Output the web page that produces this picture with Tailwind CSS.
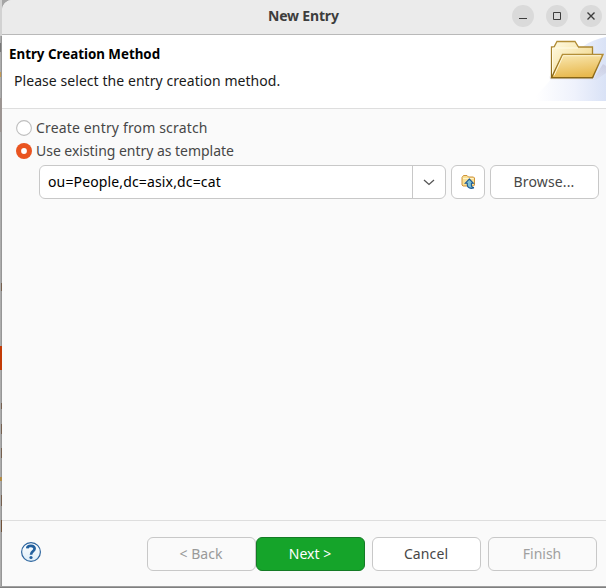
<!DOCTYPE html>
<html lang="en">
<head>
<meta charset="utf-8">
<title>New Entry</title>
<script src="https://cdn.jsdelivr.net/npm/@tailwindcss/browser@4"></script>
</head>
<body class="relative h-[588px] w-[606px] overflow-hidden bg-[#a5a5a5] pl-[2px] font-['Noto_Sans','Open_Sans',sans-serif] text-[14px] text-[#474747] whitespace-nowrap">
  <!-- Slivers of the window behind the dialog -->
  <div class="absolute left-0 top-0 h-[588px] w-[2px] bg-linear-to-r from-[#b8b8b8] to-[#8b8b8b]">
    <div class="absolute top-0 h-[36px] w-[2px] bg-[#d2d2d2]"></div>
    <div class="absolute top-[43px] h-[9px] w-px bg-[#777]"></div>
    <div class="absolute top-[72px] h-[5px] w-px bg-[#c49b55]"></div>
    <div class="absolute top-[98px] h-[34px] w-[2px] bg-[#9c9592]"></div>
    <div class="absolute left-px top-[283px] h-[8px] w-px bg-[#75604f]"></div>
    <div class="absolute top-[346px] h-[24px] w-[2px] bg-[#c33b06]"></div>
    <div class="absolute left-px top-[403px] h-[6px] w-px bg-[#75604f]"></div>
    <div class="absolute left-px top-[424px] h-[10px] w-px bg-[#75604f]"></div>
    <div class="absolute left-px top-[448px] h-[10px] w-px bg-[#75604f]"></div>
    <div class="absolute top-[477px] h-[4px] w-[2px] bg-[#b18b45]"></div>
    <div class="absolute left-px top-[495px] h-[11px] w-px bg-[#75604f]"></div>
    <div class="absolute left-px top-[520px] h-[12px] w-px bg-[#70523a]"></div>
  </div>
  <main class="relative flex h-[586px] w-[604px] flex-col overflow-hidden rounded-tl-[10px] bg-[#fafafa]">
    <header class="flex h-[35px] shrink-0 items-center border-b border-[#b9b9b9] bg-[#ebebeb]">
      <h1 class="ml-[266px] -mt-[3px] text-[14px] leading-5 font-bold text-[#3d3d3d]"><span class="tracking-[-0.18px]">New Entry</span></h1>
      <div class="ml-auto mr-[4px] -mt-[2px] flex gap-3">
        <svg class="size-[22px]" viewBox="0 0 22 22"><circle cx="11" cy="11" r="11" fill="#dadada"/><path d="M7 13.5h8" stroke="#3d3d3d"/></svg>
        <svg class="size-[22px]" viewBox="0 0 22 22"><circle cx="11" cy="11" r="11" fill="#dadada"/><path d="M7.5 7.5h7v7h-7z" fill="none" stroke="#3d3d3d"/></svg>
        <svg class="size-[22px]" viewBox="0 0 22 22"><circle cx="11" cy="11" r="11" fill="#dadada"/><path d="M7.5 7.5l7 7M14.500 7.500l-7 7" stroke="#3d3d3d" stroke-width="1.400"/></svg>
      </div>
    </header>

    <section class="flex h-[74px] shrink-0 justify-between border-b border-[#dedede] bg-white text-black">
      <div class="pt-[9px]">
        <h2 class="pl-[7px] text-[13.333px] leading-5 font-bold"><span>Entry Creation Method</span></h2>
        <p class="mt-[7px] pl-[12px] leading-5 text-[#1a1a1a]"><span class="tracking-[0.06px]">Please select the entry creation method.</span></p>
      </div>
      <svg class="h-[66px] w-[70px]" viewBox="536 35 70 66">
        <defs>
          <linearGradient id="haze" x1="0" x2="1"><stop offset="0" stop-color="#fff"/><stop offset=".55" stop-color="#eff2fc"/><stop offset="1" stop-color="#d9e2f6"/></linearGradient>
          <linearGradient id="front" x1="0" y1="0" x2=".25" y2="1"><stop offset="0" stop-color="#faeab6"/><stop offset="1" stop-color="#e8b94f"/></linearGradient>
          <linearGradient id="back" x1="0" y1="0" x2="1" y2="1"><stop offset="0" stop-color="#fffbe3"/><stop offset="1" stop-color="#efd07b"/></linearGradient>
          <linearGradient id="edge" x1="0" y1="0" x2="0" y2="1"><stop offset="0" stop-color="#b38e37"/><stop offset="1" stop-color="#876414"/></linearGradient>
          <linearGradient id="shade" x1="0" y1="0" x2="0" y2="1"><stop offset="0" stop-color="#bdb9ce" stop-opacity=".5"/><stop offset="1" stop-color="#bdb9ce" stop-opacity=".1"/></linearGradient>
        </defs>
        <path d="M536 101V95C557 78 571 43 606 37V101Z" fill="url(#haze)"/>
        <path d="M549 76.500H595L603 64L606 66V73L596 80H550Z" fill="url(#shade)"/>
        <path d="M551.500 77V47H554L557 41.500H575L578.500 47H592.500V77Z" fill="url(#back)" stroke="url(#edge)" stroke-width="1.300"/>
        <path d="M552.500 75V48H578" fill="none" stroke="#fffbe6"/>
        <path d="M551.500 77.700L562.500 54.500H603L592.500 77.700Z" fill="url(#front)" stroke="url(#edge)" stroke-width="1.400"/>
        <path d="M554 75.500L563.300 55.700H601" fill="none" stroke="#fff6d5"/>
      </svg>
    </section>

    <section class="flex min-h-0 flex-1 flex-col pt-[9px]">
      <label class="flex h-5 items-center gap-[4px] pl-[14px]"><svg class="size-4" viewBox="0 0 16 16"><circle cx="8" cy="8" r="7.400" fill="#fff" stroke="#bebebe" stroke-width="1.100"/></svg><span class="pb-[2px] tracking-[0.16px]">Create entry from scratch</span></label>
      <label class="mt-[3px] flex h-5 items-center gap-[4px] pl-[14px]"><svg class="size-4" viewBox="0 0 16 16"><circle cx="8" cy="8" r="8" fill="#e95420"/><circle cx="8" cy="8" r="2.900" fill="#fff"/></svg><span class="pb-[2px] tracking-[-0.03px]">Use existing entry as template</span></label>
      <div class="mt-[4px] flex h-[34px] pl-[37px]">
        <div class="flex w-[407px] rounded-[6px] border border-[#c8c8c8] bg-white">
          <div class="flex flex-1 items-center border-r border-[#c8c8c8] pl-[8px] text-black"><span class="pb-[2px] tracking-[0.14px]">ou=People,dc=asix,dc=cat</span></div>
          <div class="flex w-[32px] items-center justify-center"><svg class="h-[8px] w-[12px]" viewBox="0 0 12 8"><path d="M1 2L6 6.500L11 2" fill="none" stroke="#555" stroke-width="1.300"/></svg></div>
        </div>
        <div class="ml-[5px] flex w-[34px] items-center justify-center rounded-[6px] border border-[#c8c8c8] bg-white">
          <svg class="ml-[2px] size-4" viewBox="0 0 16 16">
            <path d="M1 11V3.500L2.500 1.500H6L7.500 3H12.500L13.500 4V11L12.500 12H2Z" fill="#f9df93" stroke="#ce933a"/>
            <path d="M2 4.500H12.500" stroke="#fff4ca"/>
            <path d="M8.300 5L12.300 9.200H10.400V11C10.400 12.500 11 13.500 12.500 13.500V14C9 15 6.300 13.500 6.300 11V9.200H4.300Z" fill="#7fbfd0" stroke="#1d5a94" stroke-width="1.100"/>
          </svg>
        </div>
        <div class="ml-[5px] flex w-[109px] items-center justify-center rounded-[6px] border border-[#c8c8c8] bg-white"><span class="pb-[2px] pr-px tracking-[0.15px]">Browse...</span></div>
      </div>
    </section>

    <footer class="flex h-[66px] shrink-0 items-start border-t border-[#dedede] pl-[18px]">
      <svg class="mt-[20px] size-[22px]" viewBox="0 0 22 22">
        <defs><linearGradient id="help" x1="0" y1="0" x2="0" y2="1"><stop stop-color="#fff"/><stop offset="1" stop-color="#dcecf7"/></linearGradient></defs>
        <circle cx="11" cy="11" r="9.400" fill="url(#help)" stroke="#2d659e" stroke-width="1.200"/>
        <path d="M7.300 7.300C7.500 3.900 14.600 3.900 14.600 7.700C14.600 10.400 11 10.300 11 13.700" fill="none" stroke="#22609e" stroke-width="2.700"/><circle cx="11" cy="16.500" r="1.600" fill="#22609e"/>
      </svg>
      <div class="ml-[105px] mt-[16px] flex h-[34px]">
        <div class="flex w-[109px] items-center justify-center rounded-[6px] border border-[#c8c8c8] text-[#999]"><span class="pb-[2px] pr-px">&lt; Back</span></div>
        <div class="flex w-[109px] items-center justify-center rounded-[6px] border border-[#147b25] bg-[#15a42a] text-white"><span class="pb-[2px] pr-px">Next &gt;</span></div>
        <div class="ml-[7px] flex w-[109px] items-center justify-center rounded-[6px] border border-[#c8c8c8] bg-white"><span class="pb-[2px] pr-px tracking-[0.1px]">Cancel</span></div>
        <div class="ml-[7px] flex w-[109px] items-center justify-center rounded-[6px] border border-[#c8c8c8] text-[#a0a0a0]"><span class="pb-[2px] pr-px">Finish</span></div>
      </div>
    </footer>
  </main>
  <div class="absolute bottom-0 left-0 h-[2px] w-[606px] bg-linear-to-b from-[#b0b0b0] to-[#707070]"></div>
</body>
</html>
